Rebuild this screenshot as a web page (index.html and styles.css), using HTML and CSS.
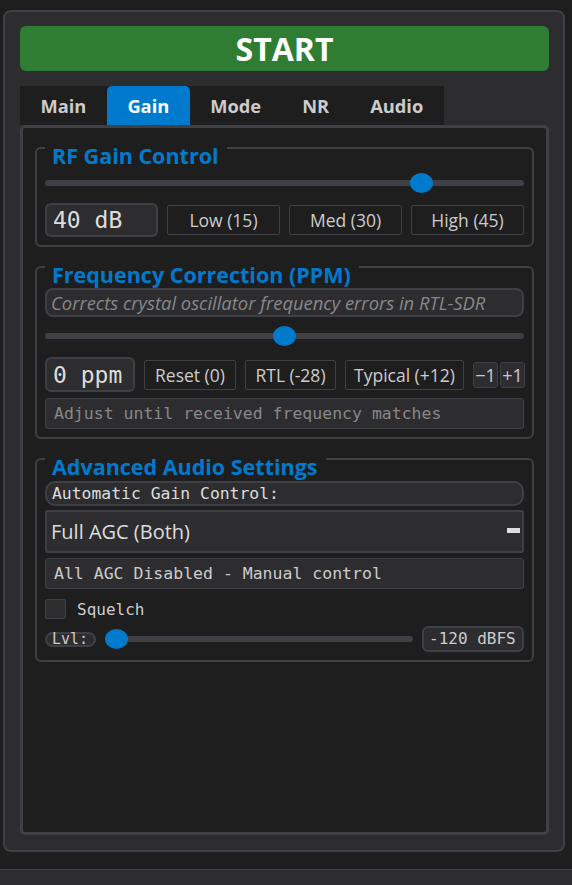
FILE: index.html
```html
<!DOCTYPE html>
<html lang="en">
<head>
<meta charset="utf-8">
<title>SDR Control</title>
<link rel="stylesheet" href="styles.css">
</head>
<body>
<div class="panel">
  <button class="start">START</button>
  <nav class="tabs">
    <button class="tab">Main</button>
    <button class="tab active">Gain</button>
    <button class="tab">Mode</button>
    <button class="tab">NR</button>
    <button class="tab">Audio</button>
  </nav>
  <div class="content">
    <fieldset class="group g-rf">
      <legend>RF Gain Control</legend>
      <input class="slider s-rf" type="range" min="0" max="50" value="40">
      <div class="gain-row">
        <div class="value-box">40 dB</div>
        <button class="btn">Low (15)</button>
        <button class="btn">Med (30)</button>
        <button class="btn">High (45)</button>
      </div>
    </fieldset>
    <fieldset class="group g-ppm">
      <legend>Frequency Correction (PPM)</legend>
      <div class="info">Corrects crystal oscillator frequency errors in RTL-SDR</div>
      <input class="slider s-ppm" type="range" min="-100" max="100" value="0">
      <div class="ppm-row">
        <div class="value-box">0 ppm</div>
        <button class="btn">Reset (0)</button>
        <button class="btn">RTL (-28)</button>
        <button class="btn">Typical (+12)</button>
        <div class="steps"><button class="step">−1</button><button class="step">+1</button></div>
      </div>
      <div class="hint">Adjust until received frequency matches</div>
    </fieldset>
    <fieldset class="group g-audio">
      <legend>Advanced Audio Settings</legend>
      <div class="label-pill">Automatic Gain Control:</div>
      <div class="select"><span>Full AGC (Both)</span><span class="select-mark"></span></div>
      <div class="status">All AGC Disabled - Manual control</div>
      <label class="check"><span class="box"></span>Squelch</label>
      <div class="lvl-row">
        <span class="lvl">Lvl:</span>
        <input class="slider s-lvl" type="range" min="-120" max="0" value="-120">
        <span class="dbfs">-120 dBFS</span>
      </div>
    </fieldset>
  </div>
</div>
<div class="footer"></div>
</body>
</html>
```

FILE: styles.css
```css
* { box-sizing: border-box; }
html, body { margin: 0; }
body {
  background: #1e1e1e;
  font-family: "Open Sans", "Noto Sans", sans-serif;
  color: #cccccc;
  height: 885px;
  overflow: hidden;
  display: flex;
  flex-direction: column;
}
button { font-family: inherit; cursor: pointer; }

.panel {
  margin: 10px 7px 0 3px;
  height: 842px;
  flex: none;
  background: #2d2d30;
  border: 2px solid #3f3f46;
  border-radius: 8px;
  padding: 14px 14px 15px 15px;
  display: flex;
  flex-direction: column;
}

.start {
  height: 45px;
  flex: none;
  background: #2e7d32;
  border: none;
  border-radius: 6px;
  color: #ffffff;
  font-size: 32px;
  font-weight: 700;
  line-height: 45px;
  padding: 0;
}

.tabs {
  margin-top: 15px;
  height: 39px;
  flex: none;
  display: flex;
  align-self: flex-start;
  background: #1e1e1e;
}
.tab {
  background: transparent;
  border: none;
  border-radius: 5px 5px 0 0;
  color: #cccccc;
  font-size: 18.3px;
  font-weight: 700;
  padding: 0 20.5px;
}
.tab.active { background: #007acc; color: #ffffff; }

.content {
  flex: 1;
  background: #1e1e1e;
  border: 3px solid #3f3f46;
  border-radius: 5px;
  padding: 1px 12px 0 12px;
}

.group {
  margin: 0 0 1px;
  border: 2px solid #3f3f46;
  border-radius: 6px;
  padding: 2px 8px 8px;
  min-width: 0;
}
.group legend {
  padding: 16px 8px 0 7px;
  margin: 0;
  color: #007acc;
  font-size: 21.5px;
  font-weight: 700;
  line-height: 22px;
}

.slider {
  -webkit-appearance: none;
  appearance: none;
  display: block;
  width: 100%;
  height: 20px;
  margin: 0;
  background: transparent;
}
.slider::-webkit-slider-runnable-track {
  height: 6px;
  background: #3f3f46;
  border-radius: 3px;
}
.slider::-webkit-slider-thumb {
  -webkit-appearance: none;
  appearance: none;
  width: 23px;
  height: 20px;
  margin-top: -7px;
  border: none;
  border-radius: 50%;
  background: #007acc;
}
.s-rf { margin-top: 4px; }
.s-ppm { margin-top: 9px; }

.value-box {
  height: 34px;
  background: #2d2d30;
  border: 2px solid #3f3f46;
  border-radius: 6px;
  color: #dddddd;
  font-family: "DejaVu Sans Mono", monospace;
  font-size: 23px;
  display: flex;
  align-items: center;
  padding-left: 6px;
}
.ppm-row .value-box { height: 35px; }

.btn {
  height: 30px;
  background: #1e1e1e;
  border: 1px solid #3f3f46;
  border-radius: 2px;
  color: #cccccc;
  font-size: 17.5px;
  padding: 0;
  white-space: nowrap;
}

.gain-row {
  margin-top: 10px;
  display: grid;
  grid-template-columns: repeat(4, 1fr);
  gap: 9px;
  align-items: center;
}

.ppm-row {
  margin-top: 11px;
  display: grid;
  grid-template-columns: 90px 92px 91px 119px 52px;
  gap: 9px;
  align-items: center;
}
.steps { display: flex; gap: 2px; }
.step {
  width: 25px;
  height: 26px;
  background: #2d2d30;
  border: 1px solid #3f3f46;
  border-radius: 3px;
  color: #cccccc;
  font-size: 18px;
  line-height: 22px;
  padding: 0;
}

.info {
  height: 29px;
  background: #2d2d30;
  border: 2px solid #3f3f46;
  border-radius: 8px;
  color: #888888;
  font-style: italic;
  font-size: 18.4px;
  line-height: 25px;
  padding-left: 4px;
  white-space: nowrap;
}

.hint, .status {
  height: 31px;
  background: #2d2d30;
  border: 1px solid #3f3f46;
  border-radius: 3px;
  font-family: "DejaVu Sans Mono", monospace;
  font-size: 16.5px;
  line-height: 29px;
  padding-left: 8px;
  white-space: nowrap;
}
.hint { margin-top: 6px; color: #888888; }
.status { margin-top: 5px; color: #cccccc; }

.label-pill {
  margin-top: 1px;
  height: 25px;
  background: #2d2d30;
  border: 2px solid #3f3f46;
  border-radius: 10px;
  color: #dddddd;
  font-family: "DejaVu Sans Mono", monospace;
  font-size: 16.4px;
  line-height: 21px;
  padding-left: 5px;
  white-space: nowrap;
}

.select {
  margin-top: 4px;
  height: 43px;
  background: #2d2d30;
  border: 2px solid #3f3f46;
  border-radius: 3px;
  color: #dddddd;
  font-size: 20px;
  display: flex;
  align-items: center;
  justify-content: space-between;
  padding: 0 2px 0 4px;
}
.select-mark {
  width: 13px;
  height: 5px;
  background: #dddddd;
  margin-bottom: 2px;
}

.check {
  margin-top: 10px;
  display: flex;
  align-items: center;
  gap: 11px;
  color: #cccccc;
  font-family: "DejaVu Sans Mono", monospace;
  font-size: 16px;
  height: 20px;
}
.check .box {
  width: 21px;
  height: 20px;
  background: #2d2d30;
  border: 1px solid #3f3f46;
  border-radius: 2px;
}

.lvl-row {
  margin-top: 7px;
  display: flex;
  align-items: center;
  gap: 9px;
}
.lvl {
  height: 15px;
  background: #2d2d30;
  border: 2px solid #3f3f46;
  border-radius: 8px;
  color: #cccccc;
  font-family: "DejaVu Sans Mono", monospace;
  font-size: 15px;
  line-height: 11px;
  padding: 0 6px 0 5px;
}
.s-lvl { flex: 1; width: auto; }
.dbfs {
  width: 102px;
  height: 26px;
  background: #2d2d30;
  border: 2px solid #3f3f46;
  border-radius: 6px;
  color: #cccccc;
  font-family: "DejaVu Sans Mono", monospace;
  font-size: 16px;
  line-height: 22px;
  padding-left: 5px;
  white-space: nowrap;
}

.footer {
  margin-top: 17px;
  height: 16px;
  flex: none;
  background: #2d2d30;
  border-top: 1px solid #3f3f46;
}
```
